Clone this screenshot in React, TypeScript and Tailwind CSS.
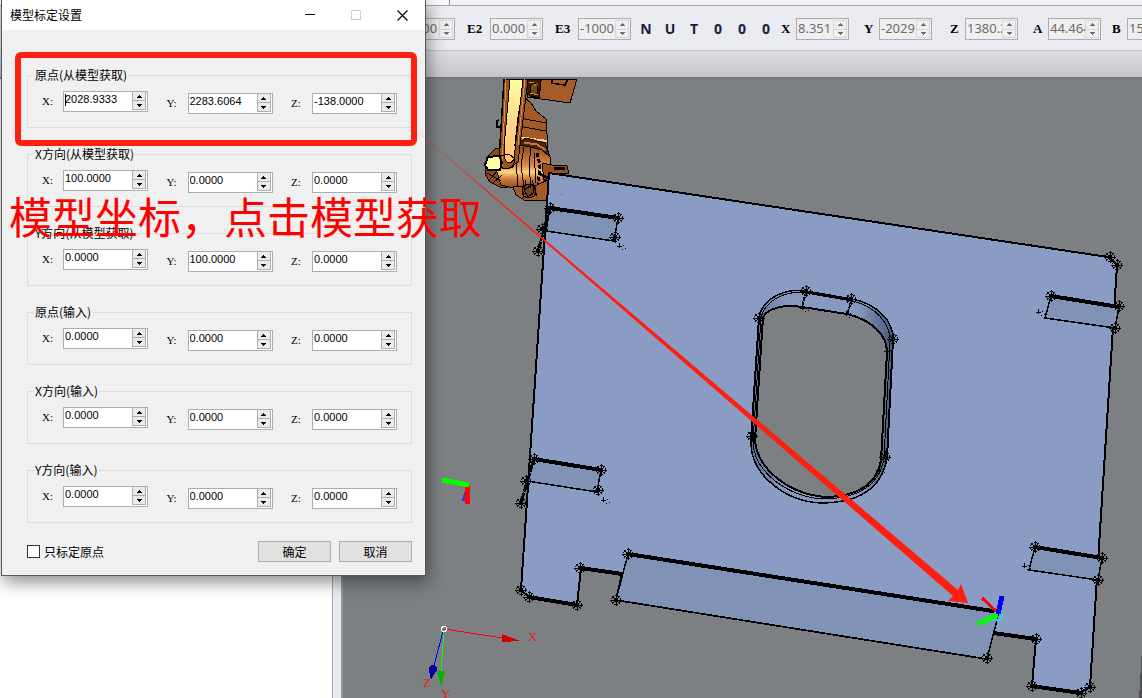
import { useState } from "react";

interface Field {
  axis: string;
  value: string;
}

interface Group {
  title: string;
  values: string[];
}

const groups: Group[] = [
  { title: "原点(从模型获取)", values: ["2028.9333", "2283.6064", "-138.0000"] },
  { title: "X方向(从模型获取)", values: ["100.0000", "0.0000", "0.0000"] },
  { title: "Y方向(从模型获取)", values: ["0.0000", "100.0000", "0.0000"] },
  { title: "原点(输入)", values: ["0.0000", "0.0000", "0.0000"] },
  { title: "X方向(输入)", values: ["0.0000", "0.0000", "0.0000"] },
  { title: "Y方向(输入)", values: ["0.0000", "0.0000", "0.0000"] },
];

const extraAxes: Field[] = [
  { axis: "E2", value: "0.000" },
  { axis: "E3", value: "-1000" },
];

const poseAxes = [
  { axis: "X", value: "8.351", gap: "ml-[3px]" },
  { axis: "Y", value: "-2029", gap: "ml-[15px]" },
  { axis: "Z", value: "1380.2", gap: "ml-[18px]" },
  { axis: "A", value: "44.464", gap: "ml-[15px]" },
  { axis: "B", value: "15.000", gap: "ml-[11px]" },
];

const flags = ["N", "U", "T", "0", "0", "0"];

const Arrow = ({ up }: { up?: boolean }) => (
  <svg viewBox="0 0 5 3" className="h-[3px] w-[5px]" fill="currentColor" shapeRendering="crispEdges">
    <path d={up ? "M2 0h1v1h1v1h1v1H0V2h1V1h1z" : "M0 0h5v1H4v1H3v1H2V2H1V1H0z"} />
  </svg>
);

const AxisBox = ({ axis, value }: Field) => (
  <div className="flex h-[22px] w-[53px] shrink-0 border border-[#abadb3] bg-[#efeff0]">
    <input
      aria-label={axis}
      disabled
      defaultValue={value}
      className="h-[18px] w-0 min-w-0 flex-1 pl-px font-['Noto_Sans'] text-[13px] leading-4 font-normal text-[#6d6d6d]"
    />
    <div className="my-px mr-px flex w-[14px] flex-col border border-[#d6d6d6] text-[#6d6d6d]">
      <button disabled aria-label={`${axis} up`} className="flex flex-1 items-center justify-center border-b border-[#d6d6d6]">
        <Arrow up />
      </button>
      <button disabled aria-label={`${axis} down`} className="flex flex-1 items-center justify-center">
        <Arrow />
      </button>
    </div>
  </div>
);

const Toolbar = () => (
  <header className="shrink-0">
    <div className="h-[5px] bg-[#f3f4f6]">
      <div className="h-full w-[450px] border-r border-[#8c8e94] bg-[#f8f8f9]" />
    </div>
    <div className="flex h-[46px] items-center overflow-hidden border-y border-t-[#a5a7ab] border-b-[#c3c5ca] bg-[#e9ebf0] pt-0.5 pl-[402px] font-['Liberation_Serif'] text-[13px] font-bold text-black">
      <AxisBox axis="E1" value="0.000" />
      {extraAxes.map((item) => (
        <div key={item.axis} className="ml-3 flex shrink-0 items-center">
          <span className="w-[23px]">{item.axis}</span>
          <AxisBox {...item} />
        </div>
      ))}
      <div className="ml-[3px] flex shrink-0 font-['Noto_Sans'] text-sm text-[#1b1b3a]">
        {flags.map((flag, i) => (
          <span key={i} className="w-6 text-center">
            {flag}
          </span>
        ))}
      </div>
      {poseAxes.map(({ axis, value, gap }) => (
        <div key={axis} className={`flex shrink-0 items-center ${gap}`}>
          <span className="w-[15px]">{axis}</span>
          <AxisBox axis={axis} value={value} />
        </div>
      ))}
    </div>
    <div className="h-7 border-b-2 border-[#77787b] bg-linear-to-b from-[#dbdce1] to-[#c5c6cc]" />
  </header>
);

// small crosshair drawn on every vertex of the part
const Node = ({ x, y, faint }: { x: number; y: number; faint?: boolean }) => (
  <g transform={`translate(${x} ${y})`} stroke="#000" fill="none" strokeWidth="1">
    {faint ? (
      <path d="M-3 0h5M-1 -3v5M3 -1h1M5 2h1M2 3h1" />
    ) : (
      <>
        <circle r="4.500" strokeDasharray="4 1" />
        <circle r="2" fill="#000" />
        <path d="M-6 0h12M0 -6v12M-4 -4l8 8M-4 4l8 -8" />
      </>
    )}
  </g>
);

const nodes = [
  [550, 208], [618, 218], [542, 229], [538, 251], [615, 237],
  [1110, 257], [1117, 265], [1051, 296], [1119, 306], [1115, 328],
  [534, 459], [601, 470], [526, 481], [521, 503], [598, 490],
  [1035, 547], [1102, 558], [1098, 580],
  [521, 590], [529, 597], [577, 605], [580, 568], [628, 554], [616, 600],
  [987, 658], [1036, 639], [1032, 686], [1081, 693], [1090, 687],
  [806, 291], [851, 299], [893, 339], [759, 318], [752, 436], [885, 457],
];

const faintNodes = [
  [620, 246], [1039, 312], [604, 500], [1025, 566], [803, 308], [847, 314], [887, 351], [879, 470],
];

const slots = [
  [[550, 208], [618, 218], [614, 241], [546, 231]],
  [[1051, 296], [1119, 307], [1115, 328], [1045, 318]],
  [[534, 459], [601, 470], [597, 492], [527, 481]],
  [[1035, 547], [1102, 558], [1098, 580], [1029, 570]],
];

const Robot = () => (
  <g stroke="#000" strokeWidth="1" strokeLinejoin="round">
    <path d="M528 79h49l-7 24-43-6z" fill="#a65c26" />
    <path d="M552 79v4l5 1 8 1 3-6M541 79l-2 19" fill="none" strokeWidth="1.5" />
    <path d="M526 79h15l-2 19-9-2-5-5z" fill="#3b1c08" />
    <ellipse cx="534" cy="89" rx="4" ry="6" fill="#7c441b" />
    <path d="M529 82h5M530 93l8 2" stroke="#e58c42" />
    <path d="M534 85h3" stroke="#00c040" strokeWidth="2" />
    <path d="M536 84h2" stroke="#ff0000" strokeWidth="3" />
    <path d="M524 97l7 6 5 8 10 8 2 30-33-4z" fill="#a35a26" />
    <path d="M520 118l26 5M518 126l28 5M517 141l29 5" fill="none" />
    <path d="M518 137l29 4" stroke="#ffc880" strokeWidth="2" />
    <path d="M495 149l-8 8-2 17 5 8 12 6 12-2V146z" fill="#8c4b1d" />
    <path d="M502 152l14-7 28 2 7 12-2 18-10 9-18 4-20-5-5-16z" fill="url(#ball)" />
    <path d="M516 144l10-6 19 5 5 14-8-7-12-3z" fill="#4b270f" />
    <path d="M524 143l12 1 10 6" stroke="#c77832" fill="none" strokeWidth="2" />
    <path d="M513 187l3 8 10 6 21-1 1-20-11 5z" fill="#a35a26" />
    <circle cx="529" cy="191" r="7" fill="#75401a" />
    <path d="M524 190l9-6 1 8-6 5zM526 180l-3 18M532 180l5 16" fill="none" />
    <path d="M518 148l-2 14 2 24M524 147l-3 18 3 23M531 147l-2 18 2 23M534 153l2 30" fill="none" />
    <path d="M537 153l3 12-2 19" fill="none" strokeWidth="3" strokeDasharray="4 2" />
    <path d="M504 79h24l-10 83-8 6h-8l-3-14z" fill="#9b5221" />
    <path d="M510 79h13l-9 80q-5 8-9 0l-1-11z" fill="url(#arm)" />
    <path d="M506 79l-4 88M525 79l-7 66" stroke="#e28b42" />
    <path d="M504 79l-5 82M519 111l-4 35M499 120l-2 1v6h4" fill="none" strokeWidth="1.5" />
    <path d="M488 157l11-1 3 6-2 8h-12l-3-5z" fill="#ffffa6" strokeWidth="2" />
    <path d="M500 156l9-2 6 5-2 8-8 2-5-3z" fill="none" />
    <path d="M487 173l14 8M490 179l8-9M493 183l9-8" fill="none" />
    <path d="M542 163l10 2 15 1 2 7-14 1-11 6z" fill="#99501f" />
    <path d="M540 174l10 5M554 168l11 1" fill="none" strokeWidth="3" />
  </g>
);

const Viewport = () => (
  <svg viewBox="343 79 799 619" className="block h-auto w-full" shapeRendering="crispEdges" aria-label="3D view">
    <defs>
      <linearGradient id="arm" x1="0" y1="0" x2="0" y2="1">
        <stop offset="0" stopColor="#ffff9e" />
        <stop offset="0.5" stopColor="#ffd988" />
        <stop offset="1" stopColor="#ffc070" />
      </linearGradient>
      <linearGradient id="ball" x1="0" y1="0" x2="0" y2="1">
        <stop offset="0" stopColor="#8a4a1c" />
        <stop offset="0.45" stopColor="#d98645" />
        <stop offset="0.6" stopColor="#ffd680" />
        <stop offset="0.75" stopColor="#d07c3c" />
        <stop offset="1" stopColor="#7c421a" />
      </linearGradient>
      <linearGradient id="rim" x1="0" y1="0" x2="1" y2="0">
        <stop offset="0" stopColor="#5f6f91" />
        <stop offset="0.25" stopColor="#8799c1" />
        <stop offset="0.75" stopColor="#8799c1" />
        <stop offset="1" stopColor="#4d5a78" />
      </linearGradient>
    </defs>
    <Robot />

    <path
      d="M549 173L1108 257L1117 265L1090 687L1080 693L1032 686L1036 639L993 633L987 659L616 600L622 574L581 568L577 605L529 597L521 590Z"
      fill="#8a9cc4"
      stroke="#000"
      strokeWidth="2"
    />
    <path d="M628 554L999 612L987 659L616 600Z" fill="#8092b6" stroke="#000" strokeWidth="1.5" />
    <path d="M628 554L999 612" stroke="#000" strokeWidth="4" />
    <path d="M581 568L622 574M529 597L577 605M993 633L1036 639M1032 686L1080 693" stroke="#000" strokeWidth="4" />
    {slots.map((slot, i) => (
      <g key={i} stroke="#000">
        <path d={`M${slot.join("L")}Z`} fill="#8092b6" strokeWidth="1.5" />
        <path d={`M${slot[0]}L${slot[1]}`} strokeWidth="4" />
      </g>
    ))}
    <path d="M550 208L538 251M534 459L521 503" stroke="#000" strokeWidth="3" strokeDasharray="6 1" />
    <path d="M562 178h2M584 180h1M561 194h2" stroke="#69799b" />

    <path
      d="M759 318C762 298 785 288 806 291L852 299C878 304 894 322 893 340L887 458C882 488 860 503 820 503C785 501 752 475 751 445Z"
      fill="url(#rim)"
      stroke="#000"
      strokeWidth="1.5"
    />
    <path
      d="M763 317C768 308 785 304 802 307L847 314C872 320 887 335 887 352L881 460C878 483 858 497 825 497C790 494 757 470 755 440Z"
      fill="#7d8082"
      stroke="#000"
      strokeWidth="2"
    />
    <path
      d="M761 318C765 300 786 290 806 293L852 301C876 306 891 324 890 342L884 458C880 485 858 499 822 499C787 496 754 472 753 442Z"
      fill="none"
      stroke="#000"
      strokeWidth="1"
    />
    <path d="M759 318L751 440M763 317L755 440M893 340L887 458M887 352L881 460" stroke="#000" strokeWidth="2" />
    <path d="M806 292L852 300" stroke="#000" strokeWidth="3" />
    <path d="M806 292L802 307M852 300L847 314" stroke="#000" strokeWidth="2" strokeDasharray="4 1" />

    {nodes.map(([x, y]) => (
      <Node key={`${x}-${y}`} x={x} y={y} />
    ))}
    {faintNodes.map(([x, y]) => (
      <Node key={`${x}-${y}`} x={x} y={y} faint />
    ))}

    <g fill="none">
      <circle cx="998" cy="616" r="4" stroke="#00f0ff" strokeWidth="2" strokeDasharray="2 1" />
      <path d="M982 598L996 611" stroke="#f00" strokeWidth="3" />
      <path d="M978 624L998 615" stroke="#0f0" strokeWidth="5" />
      <path d="M1002 596L998 614" stroke="#00f" strokeWidth="5" />
      <path d="M468 486L463 501" stroke="#33f" strokeWidth="3" />
      <path d="M468 485L467 504" stroke="#f00" strokeWidth="5" />
      <path d="M442 480L469 485" stroke="#0f0" strokeWidth="5" />
    </g>

    <path d="M444 629L503 638" stroke="#f00" />
    <path d="M502 634L520 641L502 642Z" fill="#d40000" />
    <path d="M443 631L434 666" stroke="#00f" />
    <circle cx="433" cy="669" r="4" fill="#00009c" />
    <path d="M429 670L436 671L431 680Z" fill="#00009c" />
    <path d="M444 631L441 672" stroke="#0f0" />
    <path d="M437 671H445L441 687Z" fill="#00b400" />
    <circle cx="444" cy="629" r="2.5" fill="none" stroke="#fff" />
    <g fill="#e02020" fontFamily="Liberation Serif, serif" fontSize="13">
      <text x="528" y="641">X</text>
      <text x="423" y="687">Z</text>
      <text x="441" y="698">Y</text>
    </g>
    <path d="M1142 648L1139 698H1142Z" fill="#4e5051" />
  </svg>
);

const SpinBox = ({ axis, value, caret }: Field & { caret?: boolean }) => {
  const [text, setText] = useState(value);
  const step = (delta: number) => setText((Number(text) + delta).toFixed(4));

  return (
    <label className="flex h-[21px] items-center first:self-start">
      <span className="w-[21px] font-['Liberation_Serif'] text-[11px]">{axis}:</span>
      <span className="relative flex h-[21px] w-[85px] border border-[#abadb3] bg-white">
        <input
          value={text}
          onChange={(e) => setText(e.target.value)}
          className="h-[15px] w-0 min-w-0 flex-1 pl-px font-['Liberation_Sans'] text-[11px] leading-[15px] outline-none"
        />
        {caret && <span className="absolute top-0.5 left-px h-3 w-px bg-black" />}
        <span className="mr-px flex h-[18px] w-[14px] flex-col gap-px bg-[#abadb3] px-px pb-px">
          <button type="button" aria-label={`${axis} +`} onClick={() => step(1)} className="flex flex-1 items-center justify-center bg-[#ebebeb]">
            <Arrow up />
          </button>
          <button type="button" aria-label={`${axis} -`} onClick={() => step(-1)} className="flex flex-1 items-center justify-center bg-[#ebebeb]">
            <Arrow />
          </button>
        </span>
      </span>
    </label>
  );
};

const CalibrationDialog = () => (
  <form
    role="dialog"
    aria-label="模型标定设置"
    onSubmit={(e) => e.preventDefault()}
    className="absolute top-0 left-px w-[425px] border border-t-0 border-[#55585a] bg-[#f0f0f0] text-xs text-black shadow-[2px_6px_16px_rgba(0,0,0,0.45)]"
  >
    <div className="flex h-[30px] items-center bg-white">
      <h1 className="flex-1 pl-2">模型标定设置</h1>
      <button type="button" aria-label="minimize" className="flex h-full w-[46px] items-center justify-center">
        <svg viewBox="0 0 11 11" className="h-[11px] w-[11px]" stroke="#000">
          <path d="M0 4.500h10" />
        </svg>
      </button>
      <button type="button" disabled aria-label="maximize" className="flex h-full w-[46px] items-center justify-center">
        <svg viewBox="0 0 11 11" className="h-[11px] w-[11px]" stroke="#ccc" fill="none">
          <path d="M.5.500h9v9h-9z" />
        </svg>
      </button>
      <button type="button" aria-label="close" className="flex h-full w-[46px] items-center justify-center">
        <svg viewBox="0 0 11 11" className="h-[11px] w-[11px]" stroke="#000" strokeWidth="1.2">
          <path d="M.5.500l10 10M10.500.500l-10 10" />
        </svg>
      </button>
    </div>
    <div className="flex flex-col gap-[18px] pt-[37px] pr-[13px] pb-[13px] pl-[25px]">
      {groups.map(({ title, values }, row) => (
        <fieldset key={title} className="min-w-0 border border-[#dcdcdc] px-1.5 pb-[13px]">
          <legend className="px-px leading-4">{title}</legend>
          <div className="flex h-[31px] items-end justify-between px-2 pt-2">
            {["X", "Y", "Z"].map((axis, col) => (
              <SpinBox key={axis} axis={axis} value={values[col]} caret={row === 0 && col === 0} />
            ))}
          </div>
        </fieldset>
      ))}
      <div className="flex items-center gap-2">
        <label className="flex flex-1 items-center gap-1">
          <input type="checkbox" className="h-[13px] w-[13px] appearance-none border border-[#333] bg-white checked:bg-[#333]" />
          只标定原点
        </label>
        <button type="submit" className="h-[21px] w-[73px] border border-[#adadad] bg-[#e1e1e1]">
          确定
        </button>
        <button type="button" className="h-[21px] w-[73px] border border-[#adadad] bg-[#e1e1e1]">
          取消
        </button>
      </div>
    </div>
  </form>
);

const Annotations = () => (
  <div className="pointer-events-none">
    <div className="absolute top-[52px] left-[15px] h-[94px] w-[402px] rounded-md border-6 border-[#ff1f10]" />
    <svg viewBox="417 131 552 473" className="absolute top-[131px] left-[417px] h-[473px] w-[552px]">
      <path d="M417 131L958 590L961 584L968 603L948 601L953 596Z" fill="#ff1f10" />
    </svg>
    <p className="absolute top-[194px] left-[9px] text-[43px] leading-[43px] whitespace-nowrap text-[#ff0000]">
      模型坐标，点击模型获取
    </p>
  </div>
);

const App = () => {
  return (
    <div className="relative flex min-h-screen flex-col overflow-hidden bg-white font-['Noto_Sans_CJK_SC',sans-serif]">
      <Toolbar />
      <main className="flex flex-1">
        <aside className="w-[332px] shrink-0 bg-white" />
        <div className="w-[11px] shrink-0 border-r-2 border-l border-r-[#96969e] border-l-[#a3a6b5] bg-[#e9ebf0]" />
        <section className="min-w-0 flex-1 bg-[#7d8082]">
          <Viewport />
        </section>
      </main>
      <CalibrationDialog />
      <Annotations />
    </div>
  );
};

export default App;
